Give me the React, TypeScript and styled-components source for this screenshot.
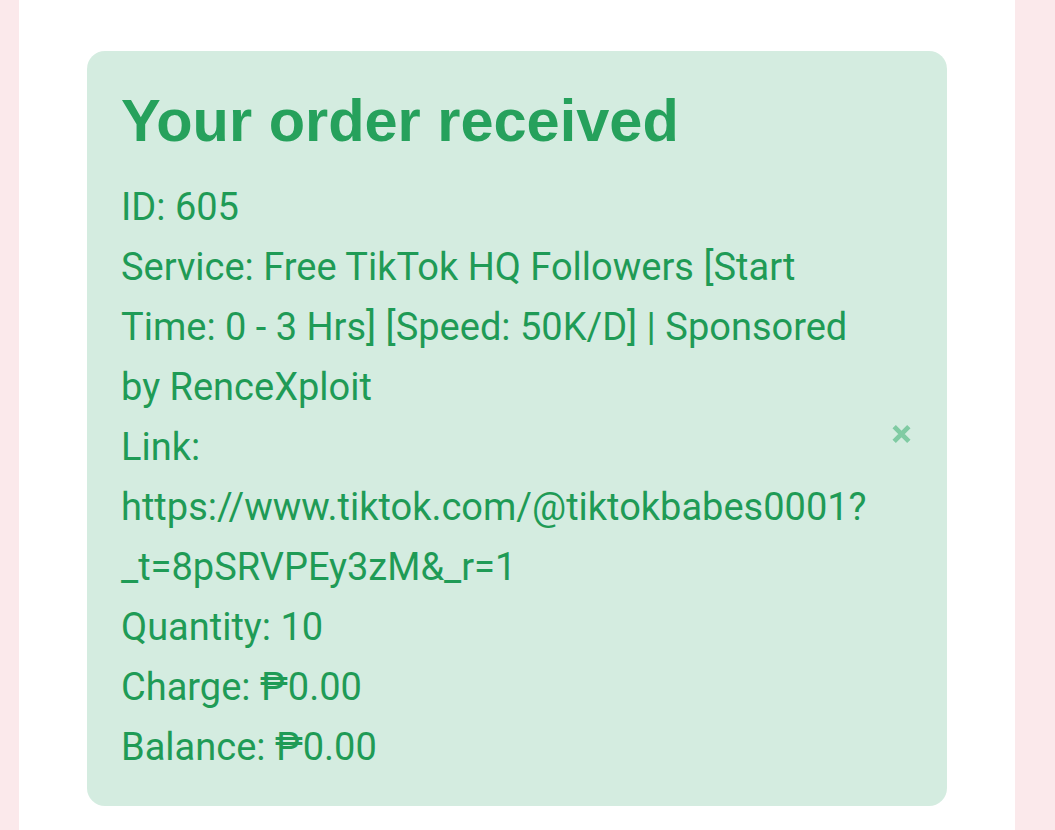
import React from 'react';
import styled, { createGlobalStyle } from 'styled-components';

const GlobalStyle = createGlobalStyle`
  html, body {
    margin: 0;
    padding: 0;
    background: #fbe9eb;
  }
  body {
    font-family: Roboto, "Noto Sans", sans-serif;
  }
`;

const order = {
  id: 605,
  service: 'Free TikTok HQ Followers [Start Time: 0 - 3 Hrs] [Speed: 50K/D] | Sponsored by RenceXploit',
  link: 'https://www.tiktok.com/@tiktokbabes0001?_t=8pSRVPEy3zM&_r=1',
  quantity: 10,
  charge: '₱0.00',
  balance: '₱0.00',
};

export default function App() {
  return (
    <>
      <GlobalStyle />
      <Page>
        <Card>
          <Alert role="alert">
            <Title>Your order received</Title>
            <Details>
              <Line>ID: {order.id}</Line>
              <Line>Service: {order.service}</Line>
              <Line>Link: {order.link}</Line>
              <Line>Quantity: {order.quantity}</Line>
              <Line>Charge: {order.charge}</Line>
              <Line>Balance: {order.balance}</Line>
            </Details>
            <CloseButton aria-label="Close">
              <svg width="21" height="21" viewBox="0 0 20 20">
                <path d="M3 3 L17 17 M17 3 L3 17" stroke="currentColor" strokeWidth="4.5" strokeLinecap="butt" />
              </svg>
            </CloseButton>
          </Alert>
        </Card>
      </Page>
    </>
  );
}

const Page = styled.div`
  min-height: 830px;
  padding: 0 40px 0 19px;
  display: flex;
`;

const Card = styled.div`
  flex: 1;
  background: #ffffff;
  padding: 51px 68px 40px 68px;
`;

const Alert = styled.div`
  position: relative;
  background: #d4ece0;
  border-radius: 18px;
  padding: 34px 66px 29px 34px;
  color: #1f9b56;
`;

const Title = styled.h4`
  margin: 0 0 21px 0;
  font-family: "Liberation Sans", Arial, sans-serif;
  font-weight: 700;
  font-size: 59.5px;
  line-height: 1.2;
  color: #26a15c;
`;

const Details = styled.div`
  font-size: 38px;
  line-height: 60px;
`;

const Line = styled.div`
  overflow-wrap: break-word;
`;

const CloseButton = styled.button`
  position: absolute;
  right: 35px;
  top: 50%;
  margin-top: 5px;
  transform: translateY(-50%);
  background: none;
  border: 0;
  padding: 0;
  display: flex;
  color: #80cba3;
  cursor: pointer;
`;
